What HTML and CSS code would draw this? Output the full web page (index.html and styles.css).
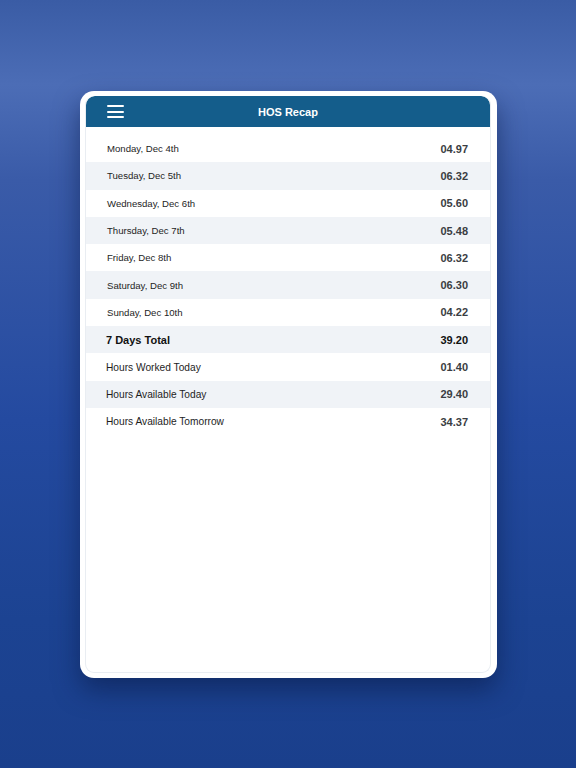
FILE: index.html
```html
<!DOCTYPE html>
<html lang="en">
<head>
    <meta charset="UTF-8">
    <meta name="viewport" content="width=device-width, initial-scale=1.0">
    <title>HOS Recap</title>
    <link rel="stylesheet" href="styles.css">
</head>
<body>
    <!-- tablet frame -->
    <div class="device">
        <div class="screen">
            <div class="topbar">
                <span class="menu">
                    <i></i><i></i><i></i>
                </span>
                <h1>HOS Recap</h1>
            </div>
            <div class="recap">
                <div class="row day"><span>Monday, Dec 4th</span><b>04.97</b></div>
                <div class="row day"><span>Tuesday, Dec 5th</span><b>06.32</b></div>
                <div class="row day"><span>Wednesday, Dec 6th</span><b>05.60</b></div>
                <div class="row day"><span>Thursday, Dec 7th</span><b>05.48</b></div>
                <div class="row day"><span>Friday, Dec 8th</span><b>06.32</b></div>
                <div class="row day"><span>Saturday, Dec 9th</span><b>06.30</b></div>
                <div class="row day"><span>Sunday, Dec 10th</span><b>04.22</b></div>
                <div class="row total"><span>7 Days Total</span><b>39.20</b></div>
                <div class="row sum"><span>Hours Worked Today</span><b>01.40</b></div>
                <div class="row sum"><span>Hours Available Today</span><b>29.40</b></div>
                <div class="row sum"><span>Hours Available Tomorrow</span><b>34.37</b></div>
            </div>
        </div>
    </div>
</body>
</html>
```

FILE: styles.css
```css
*{
    margin: 0;
    padding: 0;
    box-sizing: border-box;
}
body{
    height: 768px;
    overflow: hidden;
    font-family: "Liberation Sans", Arial, sans-serif;
    background: linear-gradient(to bottom, #3a5ca5 0, #4c6db6 85px, #3a5ba8 180px, #244aa0 420px, #1c4392 620px, #1a3f8c 768px);
}
.device{
    margin: 91px 0 0 80px;
    width: 417px;
    height: 587px;
    padding: 5px 6px 5px 5px;
    background: #fff;
    border-radius: 14px;
    box-shadow: 0 12px 26px rgba(10, 25, 70, 0.55);
}
.screen{
    height: 100%;
    border: 1px solid #e9edf2;
    border-top: none;
    border-radius: 9px;
    overflow: hidden;
}
.topbar{
    height: 31px;
    background: #145d8b;
    display: flex;
    align-items: center;
    position: relative;
    border-radius: 9px 9px 0 0;
}
.topbar h1{
    flex: 1;
    text-align: center;
    color: #fff;
    font-size: 11px;
    font-weight: bold;
}
.menu{
    position: absolute;
    left: 21px;
    top: 9px;
    display: flex;
    flex-direction: column;
    gap: 3.5px;
}
.menu i{
    display: block;
    width: 17px;
    height: 2px;
    background: #fff;
    border-radius: 1px;
}
.recap{
    padding-top: 8px;
}
.row{
    height: 27.3px;
    display: flex;
    align-items: center;
    justify-content: space-between;
    padding: 0 22px 0 21px;
}
.row:nth-child(even){
    background: #f0f3f7;
}
.row b{
    font-size: 11px;
    color: #3a3d42;
}
.day span{
    font-size: 9.6px;
    color: #1e1e1e;
}
.sum, .total{
    padding-left: 20px;
}
.sum span{
    font-size: 10.2px;
    color: #1e1e1e;
}
.total span{
    font-size: 11px;
    font-weight: bold;
    color: #111;
}
.total b{
    color: #111;
}
```
